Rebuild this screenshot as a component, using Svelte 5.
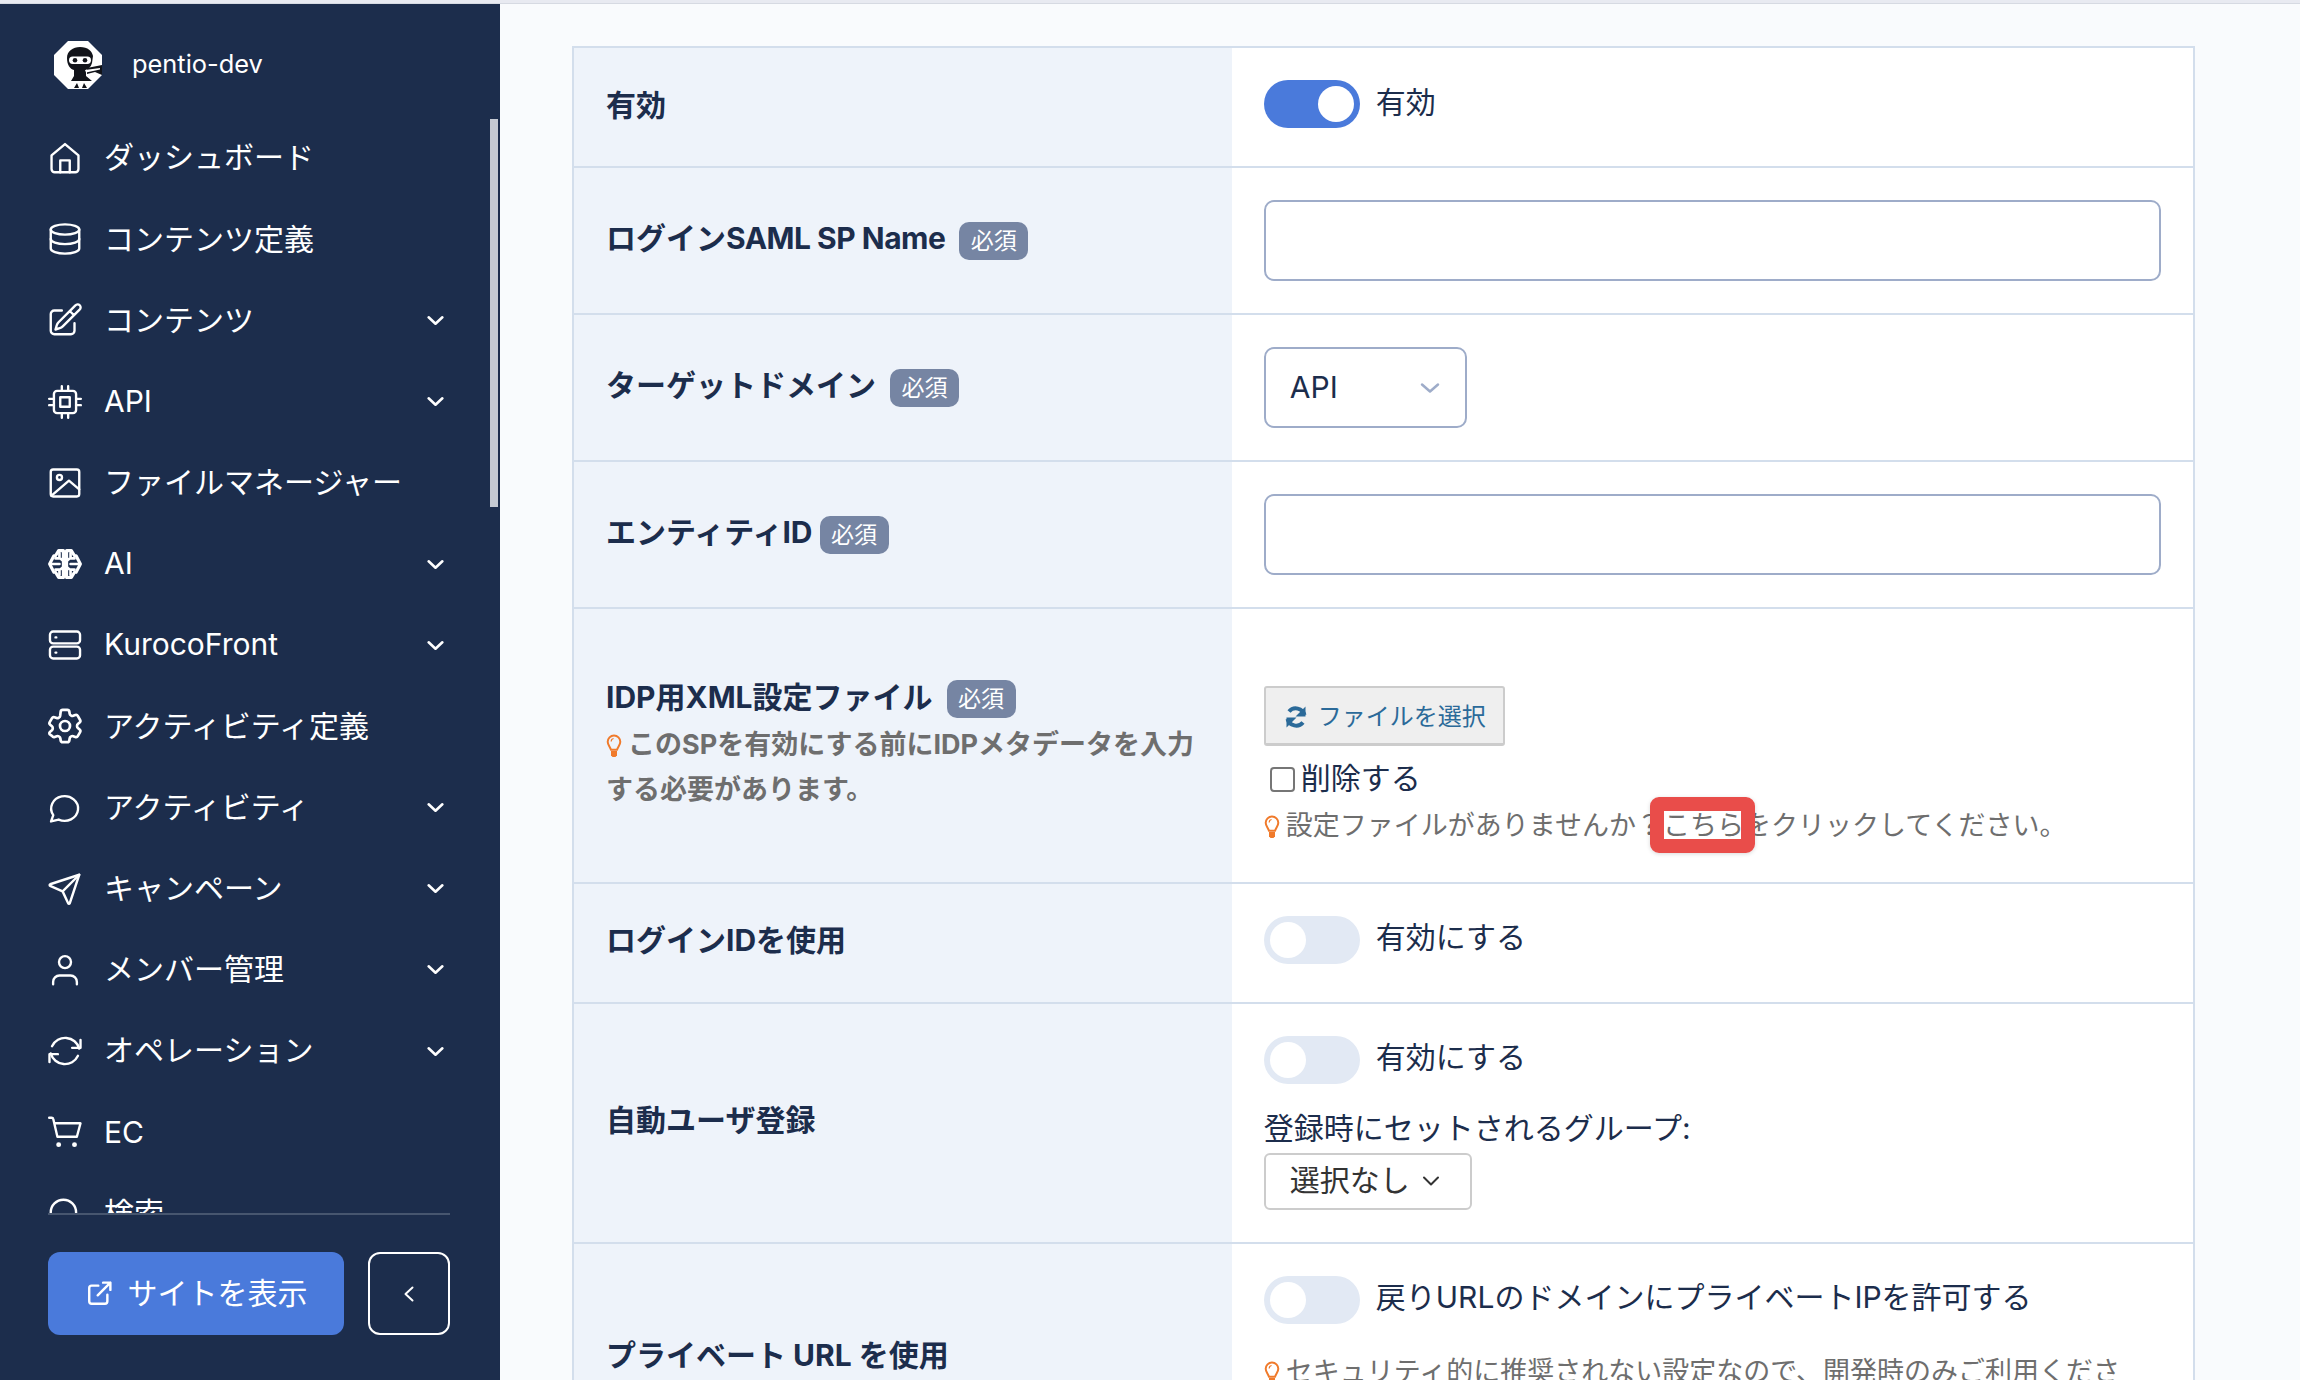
<script lang="ts">
  const icons: Record<string, string> = {
    home: '<path d="M3.500 10.400 12 3.200l8.500 7.200V19a2 2 0 0 1-2 2h-13a2 2 0 0 1-2-2z"/><path d="M9 21v-7.500h6V21"/>',
    db: '<ellipse cx="12" cy="6" rx="9" ry="3.200"/><path d="M3 6v12c0 1.770 4 3.200 9 3.200s9-1.430 9-3.200V6"/><path d="M3 12c0 1.770 4 3.200 9 3.200s9-1.430 9-3.200"/>',
    edit: '<path d="M16.860 4.490l1.690-1.690a1.880 1.880 0 1 1 2.650 2.650L10.580 16.070a4.500 4.500 0 0 1-1.900 1.130L6 18l.8-2.680a4.500 4.500 0 0 1 1.130-1.900zM15 6.300l2.700 2.700"/><path d="M18 14v4.750A2.250 2.250 0 0 1 15.750 21H5.250A2.250 2.250 0 0 1 3 18.750V8.250A2.250 2.250 0 0 1 5.250 6H10"/>',
    cpu: '<rect x="5" y="5" width="14" height="14" rx="2"/><rect x="9" y="9" width="6" height="6"/><path d="M2 10h3M2 14h3M10 2v3M14 2v3M22 10h-3M22 14h-3M14 22v-3M10 22v-3"/>',
    image: '<rect x="3" y="3.500" width="18" height="17" rx="1.500"/><circle cx="8.500" cy="8.500" r="1.600"/><path d="M3.500 20 14.500 10.500 21 16"/>',
    brain: '<path stroke-width="2" d="M11 3.500H8L6 6.800H5L2.300 12 5 17.200h1l2 3.300h3zM13 3.500h3l2 3.300h1l2.700 5.200-2.700 5.200h-1l-2 3.300h-3z"/><path stroke-width="1.700" d="M3 12h5.500M6 8.500h3l2 1.500M6 15.500h3l2-1.500M21 12h-5.500M18 8.500h-3l-2 1.500M18 15.500h-3l-2-1.500M8.500 5v2.500M15.500 5v2.500M8.500 16.500V19M15.500 16.500V19"/>',
    server: '<rect x="2.500" y="3.500" width="19" height="7.500" rx="2"/><rect x="2.500" y="13" width="19" height="7.500" rx="2"/><path d="M6 7.200h.5M6 16.800h.5"/>',
    gear: '<g transform="translate(12 12) scale(1.130) translate(-12 -12)"><path d="M9.590 3.940c.09-.54.560-.94 1.110-.94h2.600c.55 0 1.020.4 1.110.94l.21 1.280c.06.37.31.69.64.87l.22.13c.33.2.72.26 1.080.12l1.210-.45a1.130 1.130 0 0 1 1.370.49l1.300 2.250c.27.47.16 1.080-.26 1.430l-1 .83c-.29.24-.44.61-.43.99v.26c-.01.37.14.75.43.99l1 .83c.42.35.53.95.26 1.430l-1.300 2.250a1.130 1.130 0 0 1-1.370.49l-1.210-.46c-.36-.13-.75-.07-1.080.13l-.22.13c-.33.18-.58.49-.64.87l-.21 1.280c-.09.54-.56.94-1.110.94h-2.600c-.55 0-1.020-.4-1.110-.94l-.21-1.280a1.200 1.200 0 0 0-.64-.87l-.22-.13c-.33-.2-.72-.26-1.080-.13l-1.210.46a1.130 1.130 0 0 1-1.370-.49L3.450 16.600a1.130 1.130 0 0 1 .26-1.430l1-.83c.29-.24.44-.61.43-.99v-.26c.01-.37-.14-.75-.43-.99l-1-.83a1.130 1.130 0 0 1-.26-1.430l1.300-2.250a1.130 1.130 0 0 1 1.370-.49l1.210.46c.36.13.75.07 1.080-.13l.22-.13c.33-.18.58-.49.64-.87z"/><circle cx="12" cy="12" r="2.800"/></g>',
    chat: '<path d="M3.200 20.500l1.400-4A8.500 7.800 0 1 1 8 19.300z"/>',
    send: '<path d="M10.500 13.500 21 3"/><path d="M21 3l-6 18a.55.55 0 0 1-1 0L10.500 13.500 2.600 10a.55.55 0 0 1 0-1z"/>',
    user: '<circle cx="12" cy="7" r="3.800"/><path d="M4.500 21v-1.500a4 4 0 0 1 4-4h7a4 4 0 0 1 4 4V21"/>',
    sync: '<path d="M21 10.500A9.200 9.200 0 0 0 3.800 9"/><path d="M3 13.500A9.200 9.200 0 0 0 20.200 15"/><path d="M16.500 10H21.800V5M7.500 14H2.200v5"/>',
    cart: '<path d="M2 3h1.500c.5 0 1 .34 1.100.84L7.200 15h12.300l2.300-8.500H5.300"/><circle cx="8" cy="20" r=".8"/><circle cx="18" cy="20" r=".8"/>',
    search: '<circle cx="11" cy="11" r="8"/><path d="m21 21-4.300-4.300"/>'
  };

  const menu = [
    { icon: "home", label: "ダッシュボード" },
    { icon: "db", label: "コンテンツ定義" },
    { icon: "edit", label: "コンテンツ", sub: true },
    { icon: "cpu", label: "API", sub: true },
    { icon: "image", label: "ファイルマネージャー" },
    { icon: "brain", label: "AI", sub: true },
    { icon: "server", label: "KurocoFront", sub: true },
    { icon: "gear", label: "アクティビティ定義" },
    { icon: "chat", label: "アクティビティ", sub: true },
    { icon: "send", label: "キャンペーン", sub: true },
    { icon: "user", label: "メンバー管理", sub: true },
    { icon: "sync", label: "オペレーション", sub: true },
    { icon: "cart", label: "EC" },
    { icon: "search", label: "検索" }
  ];
</script>

{#snippet bulb()}
  <svg class="bulb" viewBox="0 0 16 24" aria-hidden="true">
    <path d="M8 1.500a6.300 6.300 0 0 0-6.300 6.300c0 3 2.300 4.600 3.300 8h6c1-3.400 3.300-5 3.300-8A6.300 6.300 0 0 0 8 1.500z" fill="none" stroke="#f07a2b" stroke-width="2"/>
    <path d="M5 17h6v4.200L9.500 23h-3L5 21.200z" fill="#f07a2b"/>
    <path d="M5.200 7.500c0-1.600 1-2.800 2.400-3" fill="none" stroke="#f07a2b" stroke-width="1.200"/>
  </svg>
{/snippet}

{#snippet toggle(on, text)}
  <div class="toggle-line">
    <span class="toggle" class:on><span class="knob"></span></span>
    <span class="toggle-text">{text}</span>
  </div>
{/snippet}

{#snippet required()}
  <span class="badge">必須</span>
{/snippet}

<div class="page">
  <div class="top-strip"></div>
  <div class="shell">
    <aside class="sidebar">
      <div class="brand">
        <svg class="logo" viewBox="0 0 48 48" aria-hidden="true">
          <polygon points="14,0 34,0 48,14 48,34 34,48 14,48 0,34 0,14" fill="#fff"/>
          <path d="M13 17c0-7 6-11 13-11 8 0 12 4 13 9l-1 7c-1 4-4 6-6 7v6l6 5H17l3-5v-6c-4-1-7-5-7-12z" fill="#12141a"/>
          <path d="M33 27l15-3v10l-7-3-8 2z" fill="#12141a"/>
          <path d="M31 29l15-2v1.500l-14 3z" fill="#fff"/>
          <path d="M20 47l3-5 2 5zM28 47l2-5 3 5z" fill="#12141a"/>
          <rect x="15" y="15.500" width="22" height="7.500" rx="3.700" fill="#fff"/>
          <circle cx="21" cy="19.300" r="2.300" fill="#12141a"/>
          <circle cx="31" cy="19.300" r="2.300" fill="#12141a"/>
        </svg>
        <span class="brand-name">pentio-dev</span>
      </div>

      <nav class="nav">
        {#each menu as item}
          <a class="nav-item" href="#top">
            <svg class="nav-icon" viewBox="0 0 24 24" aria-hidden="true">{@html icons[item.icon]}</svg>
            <span class="nav-label">{item.label}</span>
            {#if item.sub}
              <svg class="nav-chevron" viewBox="0 0 20 12" aria-hidden="true"><path d="M2.500 2.500 10 9.500l7.500-7"/></svg>
            {/if}
          </a>
        {/each}
        <div class="scroll-thumb"></div>
      </nav>

      <div class="side-actions">
        <button type="button" class="view-site">
          <svg viewBox="0 0 24 24" aria-hidden="true"><path d="M11 5.500H5.500a2 2 0 0 0-2 2v11a2 2 0 0 0 2 2h11a2 2 0 0 0 2-2V13"/><path d="M10.500 13.500 21 3M15 3h6v6"/></svg>
          <span>サイトを表示</span>
        </button>
        <button type="button" class="collapse" aria-label="collapse">
          <svg viewBox="0 0 12 18" aria-hidden="true"><path d="M9.500 2.500 2.500 9l7 6.500"/></svg>
        </button>
      </div>
    </aside>

    <main class="main">
      <div class="table">
        <div class="row">
          <div class="head"><strong>有効</strong></div>
          <div class="cell tall-toggle">{@render toggle(true, "有効")}</div>
        </div>

        <div class="row">
          <div class="head"><strong>ログイン<span class="latin">SAML SP Name</span></strong>{@render required()}</div>
          <div class="cell"><input class="text-input" type="text" /></div>
        </div>

        <div class="row">
          <div class="head"><strong>ターゲットドメイン</strong>{@render required()}</div>
          <div class="cell">
            <div class="select">
              <span>API</span>
              <svg viewBox="0 0 20 12" aria-hidden="true"><path d="M2 2.500l8 7 8-7"/></svg>
            </div>
          </div>
        </div>

        <div class="row">
          <div class="head"><strong>エンティティID</strong><span class="tight">{@render required()}</span></div>
          <div class="cell"><input class="text-input" type="text" /></div>
        </div>

        <div class="row">
          <div class="head column">
            <div class="head-title"><strong>IDP用XML設定ファイル</strong>{@render required()}</div>
            <p class="head-note">{@render bulb()}このSPを有効にする前にIDPメタデータを入力する必要があります。</p>
          </div>
          <div class="cell file-cell">
            <button type="button" class="file-button">
              <svg viewBox="0 0 24 24" aria-hidden="true">
                <path d="M20.500 10A9 9 0 0 0 5 6.500" fill="none" stroke="currentColor" stroke-width="4"/>
                <path d="M21.500 1.500v10h-10zM2.500 22.500v-10h10z" fill="currentColor"/>
                <path d="M3.500 14A9 9 0 0 0 19 17.500" fill="none" stroke="currentColor" stroke-width="4"/>
              </svg>
              ファイルを選択
            </button>
            <label class="check-line"><span class="check"></span>削除する</label>
            <p class="note">{@render bulb()}設定ファイルがありませんか？<span class="mark">こちら</span>をクリックしてください。</p>
          </div>
        </div>

        <div class="row">
          <div class="head"><strong>ログインIDを使用</strong></div>
          <div class="cell tall-toggle">{@render toggle(false, "有効にする")}</div>
        </div>

        <div class="row">
          <div class="head"><strong>自動ユーザ登録</strong></div>
          <div class="cell group-cell">
            {@render toggle(false, "有効にする")}
            <div class="group-label">登録時にセットされるグループ:</div>
            <div class="dropdown">
              <span>選択なし</span>
              <svg viewBox="0 0 18 10" aria-hidden="true"><path d="M2 1.500l7 7 7-7"/></svg>
            </div>
          </div>
        </div>

        <div class="row">
          <div class="head"><strong>プライベート URL を使用</strong></div>
          <div class="cell private-cell">
            {@render toggle(false, "戻りURLのドメインにプライベートIPを許可する")}
            <p class="note">{@render bulb()}セキュリティ的に推奨されない設定なので、開発時のみご利用ください。</p>
          </div>
        </div>
      </div>
    </main>
  </div>
</div>

<style>
  :global(body) {
    margin: 0;
  }

  .page {
    width: 2300px;
    height: 1380px;
    overflow: hidden;
    background: #f9fbfd;
    color: #1c2d4c;
    font-family: Inter, "Noto Sans CJK JP", sans-serif;
    font-size: 30px;
    line-height: 1.45;
  }

  .top-strip {
    height: 3px;
    background: #e8eaf1;
    border-bottom: 1px solid #d6dae2;
  }

  .shell {
    display: flex;
    height: 1376px;
  }

  /* sidebar */
  .sidebar {
    flex: 0 0 500px;
    display: flex;
    flex-direction: column;
    background: #1c2d4c;
    color: #fff;
  }

  .brand {
    flex: 0 0 113.500px;
    display: flex;
    align-items: center;
    gap: 30px;
    padding: 8px 0 0 54px;
    box-sizing: border-box;
  }

  .logo {
    width: 48px;
    height: 48px;
  }

  .brand-name {
    font-size: 25.400px;
  }

  .nav {
    position: relative;
    flex: 0 0 1095.500px;
    overflow: hidden;
  }

  .nav-item {
    display: flex;
    align-items: center;
    height: 81.2px;
    padding-left: 46px;
    color: inherit;
    text-decoration: none;
  }

  .nav-icon {
    flex: 0 0 38px;
    width: 38px;
    height: 38px;
    fill: none;
    stroke: currentColor;
    stroke-width: 1.500;
    stroke-linecap: round;
    stroke-linejoin: round;
  }

  .nav-label {
    margin-left: 20px;
  }

  .nav-chevron {
    position: absolute;
    left: 426px;
    width: 19px;
    height: 11px;
    fill: none;
    stroke: currentColor;
    stroke-width: 2.800;
    stroke-linecap: round;
    stroke-linejoin: round;
  }

  .scroll-thumb {
    position: absolute;
    top: 1.500px;
    left: 490px;
    width: 8px;
    height: 388px;
    background: #c4c9d2;
  }

  .side-actions {
    display: flex;
    gap: 24px;
    margin: 0 50px 0 48px;
    padding-top: 37px;
    border-top: 2px solid #47566f;
  }

  .view-site {
    flex: 0 0 296px;
    display: flex;
    align-items: center;
    justify-content: center;
    gap: 14px;
    height: 83px;
    border: 0;
    border-radius: 12px;
    background: #4a7adb;
    color: #fff;
    font: inherit;
  }

  .view-site svg {
    width: 29px;
    height: 29px;
    fill: none;
    stroke: currentColor;
    stroke-width: 2;
    stroke-linecap: round;
    stroke-linejoin: round;
  }

  .collapse {
    flex: 0 0 82px;
    display: flex;
    align-items: center;
    justify-content: center;
    height: 83px;
    box-sizing: border-box;
    border: 2px solid #fff;
    border-radius: 12px;
    background: transparent;
  }

  .collapse svg {
    width: 12px;
    height: 18px;
    fill: none;
    stroke: #fff;
    stroke-width: 2;
    stroke-linecap: round;
    stroke-linejoin: round;
  }

  /* form table */
  .main {
    flex: 1;
    padding: 42px 105px 0 72px;
    overflow: hidden;
  }

  .table {
    border: 2px solid #d3deec;
    border-bottom: 0;
    background: #fff;
  }

  .row {
    display: grid;
    grid-template-columns: 657.800px 1fr;
    border-bottom: 2px solid #d3deec;
  }

  .head {
    display: flex;
    align-items: center;
    padding: 0 32px 3px;
    background: #eef3fa;
  }

  .head.column {
    flex-direction: column;
    align-items: flex-start;
    justify-content: center;
    padding-bottom: 2.500px;
  }

  .head strong {
    font-weight: 700;
  }

  .latin {
    letter-spacing: -0.5px;
  }

  .head-title {
    display: flex;
    align-items: center;
  }

  .badge {
    display: inline-block;
    height: 38px;
    margin: 3px 0 0 14px;
    padding: 0 11.500px;
    border-radius: 10px;
    background: #7685a3;
    color: #fff;
    font-size: 23px;
    font-weight: 400;
    line-height: 38px;
  }

  .tight .badge {
    margin-left: 7px;
  }

  .head-note {
    margin: 2.500px 0 0;
    color: #6e6e6e;
    font-size: 27px;
    font-weight: 700;
    line-height: 45px;
  }

  .cell {
    padding: 32px;
    min-width: 0;
  }

  .tall-toggle {
    min-height: 54px;
  }

  .toggle-line {
    display: flex;
    align-items: center;
    gap: 16px;
    height: 48px;
  }

  .toggle-text {
    padding-bottom: 3px;
  }

  .toggle {
    flex: 0 0 96px;
    display: block;
    height: 48px;
    box-sizing: border-box;
    padding: 6px;
    border-radius: 24px;
    background: #e2e9f4;
  }

  .toggle.on {
    background: #4a7adb;
    padding-left: 54px;
  }

  .knob {
    display: block;
    width: 36px;
    height: 36px;
    border-radius: 50%;
    background: #fff;
  }

  .text-input {
    display: block;
    width: 100%;
    height: 81px;
    box-sizing: border-box;
    border: 2px solid #9eacc9;
    border-radius: 10px;
    background: #fff;
  }

  .select {
    display: flex;
    align-items: center;
    justify-content: space-between;
    width: 203px;
    height: 81px;
    box-sizing: border-box;
    padding: 0 26px 0 24px;
    border: 2px solid #9eacc9;
    border-radius: 10px;
  }

  .select svg {
    width: 20px;
    height: 12px;
    margin-right: -1px;
    fill: none;
    stroke: #9eacc9;
    stroke-width: 2.500;
    stroke-linecap: round;
    stroke-linejoin: round;
  }

  .file-cell {
    padding-top: 77px;
    padding-bottom: 34px;
  }

  .file-button {
    display: flex;
    align-items: center;
    gap: 10px;
    width: 241px;
    height: 60px;
    padding: 3px 0 0 18px;
    box-sizing: border-box;
    border: 2px solid #ccc;
    border-bottom-width: 3px;
    border-radius: 3px;
    background: #efefef;
    color: #2b6a99;
    font: inherit;
    font-size: 24px;
  }

  .file-button svg {
    width: 24px;
    height: 24px;
  }

  .check-line {
    display: flex;
    align-items: center;
    gap: 6px;
    margin: 12px 0 0 6px;
    height: 42px;
  }

  .check {
    width: 25px;
    height: 25px;
    box-sizing: border-box;
    border: 2px solid #767676;
    border-radius: 4px;
    background: #fff;
  }

  .note {
    margin: 2.500px 0 0;
    color: #6e6e6e;
    font-size: 27px;
    line-height: 45px;
  }

  .bulb {
    display: inline-block;
    width: 16px;
    height: 24px;
    margin-right: 6px;
    vertical-align: -4px;
  }

  .mark {
    position: relative;
  }

  /* red annotation frame sits on top of the neighbouring text */
  .mark::after {
    content: "";
    position: absolute;
    left: -13px;
    right: -11px;
    top: -12px;
    bottom: -11px;
    border: 14px solid #e94d4a;
    border-radius: 9px;
    box-shadow: 0 1px 4px rgba(0, 0, 0, 0.15);
  }

  .group-label {
    margin-top: 23px;
    line-height: 42px;
  }

  .dropdown {
    display: flex;
    align-items: center;
    gap: 12px;
    width: 208px;
    height: 57px;
    margin-top: 4px;
    padding-left: 24px;
    box-sizing: border-box;
    border: 2px solid #ccc;
    border-radius: 6px;
    color: #333;
  }

  .dropdown svg {
    width: 18px;
    height: 10px;
    fill: none;
    stroke: #333;
    stroke-width: 2;
    stroke-linecap: round;
    stroke-linejoin: round;
  }

  .private-cell .note {
    margin-top: 25px;
  }
</style>
